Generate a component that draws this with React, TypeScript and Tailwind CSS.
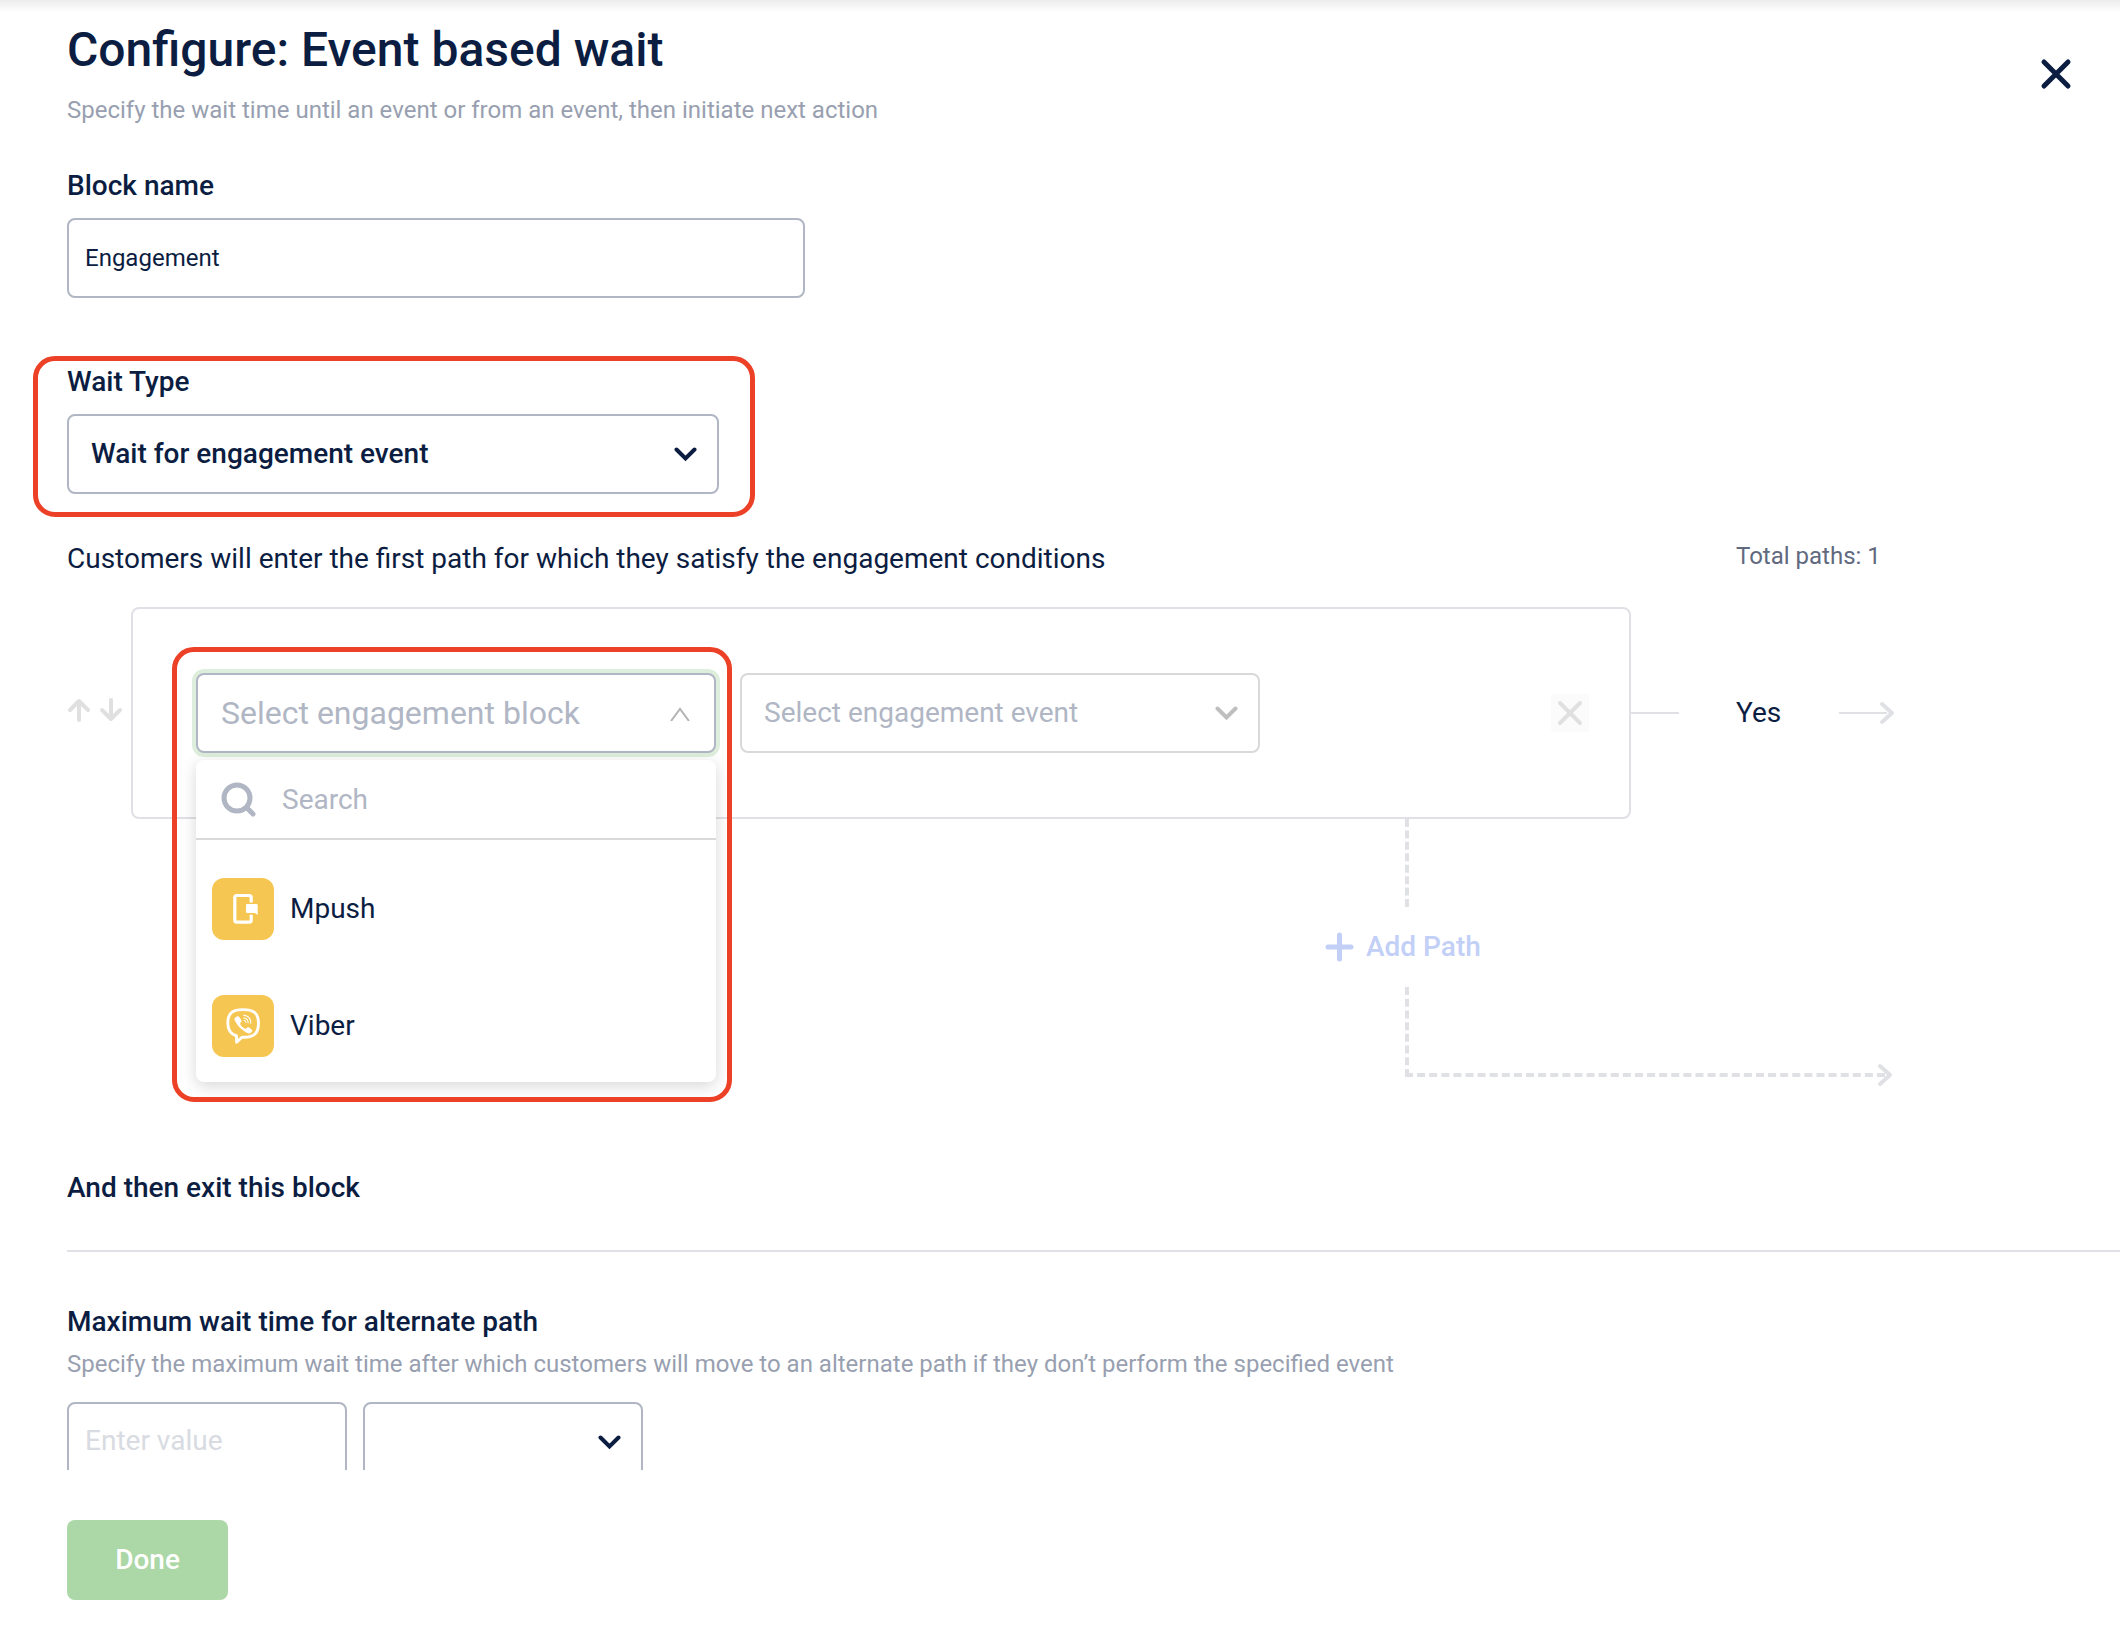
const channels = [
  { name: "Mpush", icon: <MpushIcon /> },
  { name: "Viber", icon: <ViberIcon /> },
];

function MpushIcon() {
  return (
    <svg width="62" height="62" viewBox="0 0 62 62" fill="none">
      <path
        d="M39.2 24.5V19.5a2 2 0 0 0-2-2H24.8a2 2 0 0 0-2 2v22.7a2 2 0 0 0 2 2h12.4a2 2 0 0 0 2-2V36.8"
        stroke="white"
        strokeWidth="3.2"
      />
      <path d="M35 26h9.5a1.2 1.2 0 0 1 1.2 1.2V37l-2.8-2H35a1 1 0 0 1-1-1V27a1 1 0 0 1 1-1z" fill="white" />
    </svg>
  );
}

function ViberIcon() {
  return (
    <svg width="62" height="62" viewBox="0 0 62 62" fill="none" stroke="white" strokeLinecap="round">
      <path
        d="M31 14.6C41 14.6 46.5 17.5 46.5 28 46.5 38.5 42 42 32 42.3h-2L24.6 47.3V41C18 39 15.8 35 15.8 28 15.8 17.5 21 14.6 31 14.6z"
        strokeWidth="2.9"
        strokeLinejoin="round"
      />
      <path
        d="M24 22c1.5-1.2 2.8-.6 3.6.6l1.6 2.4c.6 1 .3 1.8-.4 2.5-.8.8-.8 1.3-.2 2.2 1 1.7 2.3 2.9 4 3.8.9.5 1.5.3 2.1-.4.8-.9 1.6-1 2.6-.4l2 1.5c1.2.9 1.2 1.8.3 2.9-1 1.2-2.2 1.8-3.6 1.2C30 35.5 25 30.5 22.6 25c-.5-1.2.2-2.2 1.4-3z"
        fill="white"
        stroke="none"
      />
      <path d="M31.5 20.3c4.5.4 7.2 3.2 7.3 8M31.8 23c2.9.3 4.3 1.9 4.4 4.8M32.2 25.5c1.1.1 1.7.8 1.8 2" strokeWidth="1.1" />
    </svg>
  );
}

function Chevron({ className = "" }) {
  return (
    <svg
      className={`pointer-events-none absolute right-[22px] top-8 ${className}`}
      width="23"
      height="16"
      viewBox="0 0 23 16"
      fill="none"
      stroke="currentColor"
      strokeWidth="4"
      strokeLinecap="round"
    >
      <path d="M2.5 3.5l9 9 9-9" />
    </svg>
  );
}

function ArrowHead({ className = "" }) {
  return (
    <svg className={className} width="16" height="24" viewBox="0 0 16 24" fill="none" stroke="#e0e1e5" strokeWidth="4" strokeLinecap="round" strokeLinejoin="round">
      <path d="M3 3l10 9-10 9" />
    </svg>
  );
}

function EngagementBlockSelect() {
  return (
    <div className="relative w-[520px]">
      <button
        type="button"
        aria-haspopup="listbox"
        aria-expanded="true"
        className="flex h-20 w-full items-center justify-between rounded-lg border-2 border-[#b0b6c4] bg-white pl-[23px] pr-6 text-[32px] leading-9 text-[#b0b6c4] ring-4 ring-[#deeedd]"
      >
        Select engagement block
        <svg width="20" height="16" viewBox="0 0 20 16" fill="none" stroke="#b4b4b4" strokeWidth="2">
          <path d="M1 16l9-12 9 12" />
        </svg>
      </button>

      {/* Open menu */}
      <div className="absolute left-0 top-[87px] z-10 w-full rounded-lg bg-white shadow-[0_4px_16px_rgba(0,0,0,0.16)]">
        <label className="flex h-20 items-center gap-[26px] border-b-2 border-[#d9d9d9] pl-[25px] pt-[2px]">
          <svg width="35" height="36" viewBox="0 0 35 36" fill="none" stroke="#b0b6c4" strokeLinecap="round">
            <circle cx="16" cy="16" r="13" strokeWidth="5" />
            <path d="M26 26l6 6" strokeWidth="5" />
          </svg>
          <input
            type="text"
            aria-label="Search"
            placeholder="Search"
            className="w-80 bg-transparent text-[28px] leading-8 outline-none placeholder:text-[#b0b6c4]"
          />
        </label>
        <ul role="listbox" className="flex flex-col gap-[55px] px-4 pb-[25px] pt-[38px]">
          {channels.map((channel) => (
            <li key={channel.name} role="option" className="flex items-center gap-4 text-[28px] leading-8">
              <span className="flex size-[62px] items-center justify-center rounded-xl bg-[#f5c651]">{channel.icon}</span>
              {channel.name}
            </li>
          ))}
        </ul>
      </div>

      {/* Highlight */}
      <div className="pointer-events-none absolute -left-6 -top-[26px] z-20 h-[455px] w-[560px] rounded-[22px] border-5 border-[#ec4126]" />
    </div>
  );
}

export default function App() {
  return (
    <div className="relative flex h-screen flex-col overflow-hidden bg-white font-['Roboto',sans-serif] text-[#0c1d42]">
      <div className="pointer-events-none absolute inset-x-0 top-0 h-3 bg-linear-to-b from-[#ececec] to-transparent" />

      <main className="min-h-0 flex-1 overflow-hidden pl-[67px] pt-[22px]">
        <header className="flex items-start justify-between pr-12">
          <div>
            <h1 className="text-[48px] font-medium leading-14">Configure: Event based wait</h1>
            <p className="mt-4 text-[24px] leading-8 text-[#989fb0]">
              Specify the wait time until an event or from an event, then initiate next action
            </p>
          </div>
          <button type="button" aria-label="Close" className="mt-9">
            <svg width="32" height="32" viewBox="0 0 32 32" fill="none" stroke="currentColor" strokeWidth="5" strokeLinecap="round">
              <path d="M4 4l24 24M28 4L4 28" />
            </svg>
          </button>
        </header>

        <div className="mt-11 w-[738px]">
          <label htmlFor="block-name" className="block text-[28px] font-medium leading-8">
            Block name
          </label>
          <input
            id="block-name"
            type="text"
            defaultValue="Engagement"
            className="mt-4 block h-20 w-full rounded-lg border-2 border-[#b0b6c4] px-4 text-[24px] leading-8 outline-none"
          />
        </div>

        <div className="relative mt-[68px] w-[652px]">
          <label htmlFor="wait-type" className="block text-[28px] font-medium leading-8">
            Wait Type
          </label>
          <div className="relative mt-4">
            <select
              id="wait-type"
              className="block h-20 w-full appearance-none rounded-lg border-2 border-[#b0b6c4] bg-white px-[22px] text-[28px] font-medium leading-8 outline-none"
            >
              <option>Wait for engagement event</option>
            </select>
            <Chevron />
          </div>
          <div className="pointer-events-none absolute -bottom-[23px] -left-[34px] -right-9 -top-[10px] rounded-[22px] border-5 border-[#ec4126]" />
        </div>

        {/* Paths */}
        <section className="mr-[227px]">
          <div className="mt-[46px] flex items-start justify-between">
            <p className="text-[28px] leading-[38px]">
              Customers will enter the first path for which they satisfy the engagement conditions
            </p>
            <p className="w-[157px] whitespace-nowrap text-[24px] leading-8 text-[#61697f]">Total paths: 1</p>
          </div>

          <div className="mt-[29px] flex items-center">
            <div className="flex w-16 shrink-0 gap-2 pb-[6px]">
              <button type="button" aria-label="Move path up">
                <svg width="24" height="24" viewBox="0 0 24 24" fill="none" stroke="#e0e0e0" strokeWidth="4" strokeLinecap="round" strokeLinejoin="round">
                  <path d="M12 22V3M3 12l9-9 9 9" />
                </svg>
              </button>
              <button type="button" aria-label="Move path down">
                <svg width="24" height="24" viewBox="0 0 24 24" fill="none" stroke="#e0e0e0" strokeWidth="4" strokeLinecap="round" strokeLinejoin="round">
                  <path d="M12 2v19M3 12l9 9 9-9" />
                </svg>
              </button>
            </div>

            <div className="flex flex-1 items-center gap-6 rounded-lg border-2 border-[#e0e0e6] py-16 pl-[63px] pr-10">
              <EngagementBlockSelect />
              <div className="relative w-[520px]">
                <select
                  aria-label="Engagement event"
                  className="block h-20 w-full appearance-none rounded-lg border-2 border-[#d9d9d9] bg-white px-[22px] text-[28px] leading-8 text-[#b0b6c4] outline-none"
                >
                  <option>Select engagement event</option>
                </select>
                <Chevron className="text-[#bfbfbf]" />
              </div>
              <button type="button" aria-label="Remove path" className="ml-auto flex size-[38px] items-center justify-center bg-[#fbfbfb]">
                <svg width="26" height="26" viewBox="0 0 26 26" fill="none" stroke="#e0e0e0" strokeWidth="4" strokeLinecap="round">
                  <path d="M3 3l20 20M23 3L3 23" />
                </svg>
              </button>
            </div>

            <div className="h-[2px] w-12 bg-[#e0e1e5]" />
            <div className="ml-[57px] flex w-[157px] items-center justify-between">
              <span className="text-[28px] leading-8">Yes</span>
              <span className="relative h-[2px] w-[54px]">
                <span className="block h-[2px] w-12 bg-[#e0e1e5]" />
                <ArrowHead className="absolute -right-[2px] -top-[11px]" />
              </span>
            </div>
          </div>

          {/* Add another branch */}
          <div className="ml-auto w-[568px]">
            <div className="ml-20 h-[88px] border-l-4 border-dashed border-[#e0e1e5]" />
            <button type="button" className="flex h-20 items-center gap-3 text-[28px] font-medium leading-8 text-[#c2cff6]">
              <svg width="29" height="30" viewBox="0 0 29 30" fill="none" stroke="currentColor" strokeWidth="5" strokeLinecap="round">
                <path d="M14.5 3v24M3 15h23" />
              </svg>
              Add Path
            </button>
            <div className="relative ml-20 mr-2 h-[90px] border-b-4 border-l-4 border-dashed border-[#e0e1e5]">
              <ArrowHead className="absolute -bottom-[14px] -right-2" />
            </div>
          </div>
        </section>

        <h2 className="mt-[95px] text-[28px] font-medium leading-8">And then exit this block</h2>
        <hr className="mt-[46px] border-t-2 border-[#e0e0e6]" />

        <h2 className="mt-[54px] text-[28px] font-medium leading-8">Maximum wait time for alternate path</h2>
        <p className="mt-[10px] text-[24px] leading-8 text-[#989fb0]">
          Specify the maximum wait time after which customers will move to an alternate path if they don’t perform the specified event
        </p>
        <div className="mt-[22px] flex gap-4">
          <input
            type="text"
            aria-label="Maximum wait value"
            placeholder="Enter value"
            className="h-20 w-[280px] rounded-lg border-2 border-[#b0b6c4] px-4 pb-1 text-[28px] leading-8 outline-none placeholder:text-[#d8dbe1]"
          />
          <div className="relative w-[280px]">
            <select
              aria-label="Maximum wait unit"
              className="block h-20 w-full appearance-none rounded-lg border-2 border-[#b0b6c4] bg-white px-[22px] text-[28px] outline-none"
            >
              <option></option>
            </select>
            <Chevron />
          </div>
        </div>
      </main>

      <footer className="shrink-0 px-[67px] pb-10 pt-[50px]">
        <button type="button" className="h-20 w-[161px] rounded-lg bg-[#acd7a6] text-[28px] font-medium leading-8 text-white">
          Done
        </button>
      </footer>
    </div>
  );
}
